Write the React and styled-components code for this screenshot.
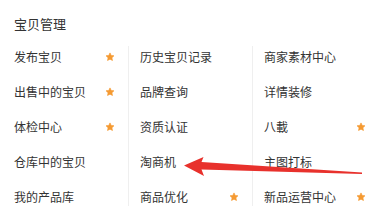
import styled, { createGlobalStyle } from 'styled-components';

const GlobalStyle = createGlobalStyle`
  html, body {
    margin: 0;
    padding: 0;
    background: #fff;
  }
  body {
    font-family: "Noto Sans CJK SC", "Noto Sans", sans-serif;
    color: #333;
  }
`;

const Panel = styled.section`
  position: relative;
  width: 383px;
  height: 217px;
  overflow: hidden;
  background: #fff;
`;

const Title = styled.h3`
  box-sizing: border-box;
  height: 39px;
  margin: 0;
  padding: 16px 14px 0;
  font-size: 13px;
  font-weight: 400;
  line-height: 16px;
  color: #333;
`;

const Grid = styled.div`
  display: grid;
  grid-template-columns: 126px 124px 1fr;
  padding: 0 3px;
`;

const Column = styled.div`
  position: relative;
  display: flex;
  flex-direction: column;

  &::after {
    content: '';
    display: ${props => (props.$last ? 'none' : 'block')};
    position: absolute;
    top: 7px;
    bottom: 8px;
    right: 0;
    width: 1px;
    background: #efefef;
  }
`;

const Item = styled.div`
  display: flex;
  align-items: center;
  justify-content: space-between;
  height: 35px;
  padding: 0 14px 0 11px;
  font-size: 12px;
  color: #333;
  white-space: nowrap;
`;

const StarIcon = () => (
  <svg width="10" height="10" viewBox="0 0 24 24" aria-hidden="true">
    <path
      d="M12 2.2l2.9 6.1 6.6.8-4.9 4.6 1.3 6.6L12 17.1l-5.9 3.2 1.3-6.6-4.9-4.6 6.6-.8z"
      fill="#f59a32"
      stroke="#f59a32"
      strokeWidth="1.6"
      strokeLinejoin="round"
    />
  </svg>
);

const Arrow = styled.svg`
  position: absolute;
  left: 0;
  top: 0;
  pointer-events: none;
`;

const columns = [
  [
    { name: '发布宝贝', star: true },
    { name: '出售中的宝贝', star: true },
    { name: '体检中心', star: true },
    { name: '仓库中的宝贝' },
    { name: '我的产品库' },
  ],
  [
    { name: '历史宝贝记录' },
    { name: '品牌查询' },
    { name: '资质认证' },
    { name: '淘商机' },
    { name: '商品优化', star: true },
  ],
  [
    { name: '商家素材中心' },
    { name: '详情装修' },
    { name: '八載', star: true },
    { name: '主图打标' },
    { name: '新品运营中心', star: true },
  ],
];

export default function App() {
  return (
    <>
      <GlobalStyle />
      <Panel>
        <Title>宝贝管理</Title>
        <Grid>
          {columns.map((col, i) => (
            <Column key={i} $last={i === columns.length - 1}>
              {col.map(item => (
                <Item key={item.name}>
                  <span>{item.name}</span>
                  {item.star && <StarIcon />}
                </Item>
              ))}
            </Column>
          ))}
        </Grid>
        <Arrow width="383" height="217" viewBox="0 0 383 217">
          <polygon
            points="184,165.5 203.5,157 201.5,162 362,172.5 362,174 201.5,169.5 204,176"
            fill="#e8312c"
          />
        </Arrow>
      </Panel>
    </>
  );
}
